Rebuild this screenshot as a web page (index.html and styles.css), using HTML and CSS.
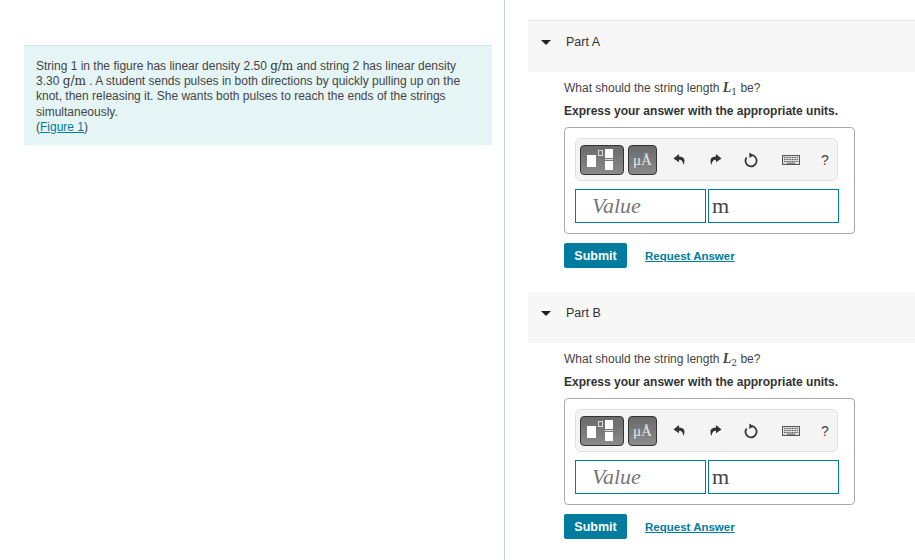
FILE: index.html
```html
<!DOCTYPE html>
<html lang="en">
<head>
    <meta charset="UTF-8">
    <title>String Pulses</title>
    <link rel="stylesheet" href="styles.css">
</head>
<body>
    <svg class="defs" width="0" height="0">
        <symbol id="icon-undo" viewBox="0 0 14 14">
            <path d="M6.5 1 L0.5 5.8 L6.5 10 L6.5 7.4 C9 7.3 10.6 8.6 11.2 12.8 C13.6 8 12.6 3.8 6.5 3.8 Z"/>
        </symbol>
        <symbol id="icon-keyboard" viewBox="0 0 18 10">
            <rect x="0.5" y="0.5" width="17" height="9" fill="#ddd" stroke="#555"/>
            <path d="M2 2.5h14M2 4.5h14M2 6.5h14" stroke="#555" stroke-dasharray="1 .6"/>
            <path d="M5 8.2h8" stroke="#555"/>
        </symbol>
    </svg>
    <div class="page">
        <!-- Problem statement -->
        <div class="left-pane">
            <div class="intro">
                String 1 in the figure has linear density 2.50 <span class="math">g/m</span> and string 2 has linear density 3.30
                <span class="math">g/m</span> . A student sends pulses in both directions by quickly pulling up on the knot,
                then releasing it. She wants both pulses to reach the ends of the strings
                simultaneously.<br>
                (<a href="#">Figure 1</a>)
            </div>
        </div>

        <div class="right-pane">
            <!-- Part A -->
            <div class="part part-first">
                <div class="part-header"><span class="caret"></span><span class="part-title">Part A</span></div>
                <div class="part-body">
                    <p class="question">What should the string length <i class="math-var">L</i><sub class="math-sub">1</sub> be?</p>
                    <p class="instruction">Express your answer with the appropriate units.</p>
                    <div class="answer-box">
                        <div class="toolbar">
                            <button class="tool-btn tool-frac">
                                <span class="sq-big"></span><span class="sq-small"></span>
                                <span class="frac"><span></span><span class="frac-bar"></span><span></span></span>
                            </button>
                            <button class="tool-btn tool-unit">μÅ</button>
                            <svg class="icon icon-undo"><use href="#icon-undo"/></svg>
                            <svg class="icon icon-redo"><use href="#icon-undo"/></svg>
                            <svg class="icon-reset" viewBox="0 0 16 16"><path d="M8.6 3.2 A5.6 5.6 0 1 1 3.6 5.4" fill="none" stroke="#333" stroke-width="1.7"/><path d="M6.4 0.4 L10.4 3.2 L6.4 6 Z" fill="#333"/></svg>
                            <svg class="icon-kbd"><use href="#icon-keyboard"/></svg>
                            <span class="help">?</span>
                        </div>
                        <div class="inputs">
                            <div class="field field-value">Value</div>
                            <div class="field field-unit">m</div>
                        </div>
                    </div>
                    <div class="actions">
                        <button class="submit">Submit</button>
                        <a class="request" href="#">Request Answer</a>
                    </div>
                </div>
            </div>

            <!-- Part B -->
            <div class="part">
                <div class="part-header"><span class="caret"></span><span class="part-title">Part B</span></div>
                <div class="part-body">
                    <p class="question">What should the string length <i class="math-var">L</i><sub class="math-sub">2</sub> be?</p>
                    <p class="instruction">Express your answer with the appropriate units.</p>
                    <div class="answer-box">
                        <div class="toolbar">
                            <button class="tool-btn tool-frac">
                                <span class="sq-big"></span><span class="sq-small"></span>
                                <span class="frac"><span></span><span class="frac-bar"></span><span></span></span>
                            </button>
                            <button class="tool-btn tool-unit">μÅ</button>
                            <svg class="icon icon-undo"><use href="#icon-undo"/></svg>
                            <svg class="icon icon-redo"><use href="#icon-undo"/></svg>
                            <svg class="icon-reset" viewBox="0 0 16 16"><path d="M8.6 3.2 A5.6 5.6 0 1 1 3.6 5.4" fill="none" stroke="#333" stroke-width="1.7"/><path d="M6.4 0.4 L10.4 3.2 L6.4 6 Z" fill="#333"/></svg>
                            <svg class="icon-kbd"><use href="#icon-keyboard"/></svg>
                            <span class="help">?</span>
                        </div>
                        <div class="inputs">
                            <div class="field field-value">Value</div>
                            <div class="field field-unit">m</div>
                        </div>
                    </div>
                    <div class="actions">
                        <button class="submit">Submit</button>
                        <a class="request" href="#">Request Answer</a>
                    </div>
                </div>
            </div>
        </div>
    </div>
</body>
</html>
```
FILE: styles.css
```css
/* Global Styles */
* {
    margin: 0;
    padding: 0;
    box-sizing: border-box;
}

html, body {
    height: 560px;
    overflow: hidden;
}

body {
    background-color: #ffffff;
    font-family: 'Liberation Sans', Arial, sans-serif;
    color: #333333;
}

.defs {
    display: block;
    height: 0;
}

.page {
    display: flex;
    height: 560px;
}

/* Left pane */
.left-pane {
    width: 505px;
    flex: none;
    padding: 45px 12px 0 24px;
    border-right: 1px solid #c3d3e3;
}

.intro {
    background-color: #e5f5f6;
    border-top: 1px solid #d9e4e4;
    padding: 13px 12px 12px 12px;
    font-size: 12px;
    line-height: 15.2px;
    height: 100px;
    color: #444444;
}

.intro a {
    color: #007c9e;
}

.math {
    font-family: 'DejaVu Serif', 'Liberation Serif', serif;
    font-size: 12px;
    color: #333333;
}

/* Right pane */
.right-pane {
    flex: 1;
    padding: 20px 0 0 23px;
    min-width: 0;
}

.part {
    height: 272px;
}

.part-header {
    height: 51px;
    background-color: #f7f7f7;
    display: flex;
    align-items: flex-start;
    padding: 13px 0 0 13px;
    font-size: 14px;
    line-height: 16px;
}

.part-first .part-header {
    border-top: 1px solid #e0e4e6;
    height: 52px;
}

.caret {
    width: 0;
    height: 0;
    margin-top: 6px;
    border-left: 5px solid transparent;
    border-right: 5px solid transparent;
    border-top: 5px solid #222222;
}

.part-title {
    margin-left: 15px;
    font-size: 12.5px;
}

.part-body {
    padding: 8px 0 0 36px;
}

.question {
    font-size: 12px;
    line-height: 16px;
    height: 23px;
    color: #444444;
}

.math-var {
    font-family: 'Liberation Serif', serif;
    font-weight: bold;
    font-size: 14px;
}

.math-sub {
    font-family: 'DejaVu Serif', serif;
    font-size: 9px;
    line-height: 0;
}

.instruction {
    font-size: 12px;
    font-weight: bold;
    line-height: 16px;
    color: #333333;
}

.answer-box {
    width: 291px;
    height: 107px;
    margin-top: 8px;
    border: 1px solid #aaaaaa;
    border-radius: 4px;
    padding: 10px 0 0 10px;
}

.toolbar {
    width: 263px;
    height: 43px;
    background-color: #f4f4f4;
    border: 1px solid #e0e0e0;
    border-radius: 6px;
    display: flex;
    align-items: center;
    padding-left: 4px;
}

.tool-btn {
    height: 30px;
    background: linear-gradient(#6a6a6a, #8a8a8a);
    border: 1px solid #333333;
    border-radius: 4px;
    flex: none;
    color: #e8e8e8;
}

.tool-frac {
    width: 44px;
    position: relative;
    display: flex;
    padding: 3px 0 0 6px;
}

.sq-big {
    width: 9px;
    height: 12px;
    background-color: #ffffff;
    margin-top: 6px;
}

.sq-small {
    width: 5px;
    height: 6px;
    border: 1px solid #dddddd;
    margin: 1px 0 0 2px;
}

.frac {
    display: flex;
    flex-direction: column;
    gap: 1px;
    margin-left: 2px;
}

.frac span {
    width: 8px;
    height: 9px;
    background-color: #ffffff;
}

.frac .frac-bar {
    height: 1px;
    background-color: #dddddd;
}

.tool-unit {
    width: 29px;
    margin-left: 4px;
    font-family: 'Liberation Serif', serif;
    font-size: 15px;
    line-height: 18px;
}

.icon {
    width: 13px;
    height: 13px;
    fill: #333333;
    flex: none;
}

.icon-undo {
    margin-left: 16px;
}

.icon-redo {
    margin-left: 23px;
    transform: scaleX(-1);
}

.icon-reset {
    width: 16px;
    height: 16px;
    margin-left: 21px;
    flex: none;
}

.icon-kbd {
    width: 18px;
    height: 10px;
    margin-left: 23px;
    flex: none;
}

.help {
    margin-left: 21px;
    font-size: 14px;
    color: #444444;
}

.inputs {
    display: flex;
    gap: 2px;
    margin-top: 8px;
}

.field {
    width: 131px;
    height: 34px;
    border: 1px solid #007c9e;
    font-family: 'Liberation Serif', serif;
    font-size: 22px;
    line-height: 32px;
}

.field-value {
    padding-left: 16px;
    font-style: italic;
    color: #777777;
}

.field-unit {
    padding-left: 3px;
    color: #444444;
}

.actions {
    display: flex;
    align-items: center;
    margin-top: 9px;
}

.submit {
    width: 63px;
    height: 25px;
    background-color: #007c9e;
    border: none;
    border-radius: 2px;
    color: #ffffff;
    font-family: 'Liberation Sans', Arial, sans-serif;
    font-size: 12.5px;
    font-weight: bold;
}

.request {
    margin-left: 18px;
    color: #007c9e;
    font-size: 11.5px;
    font-weight: bold;
}
```
